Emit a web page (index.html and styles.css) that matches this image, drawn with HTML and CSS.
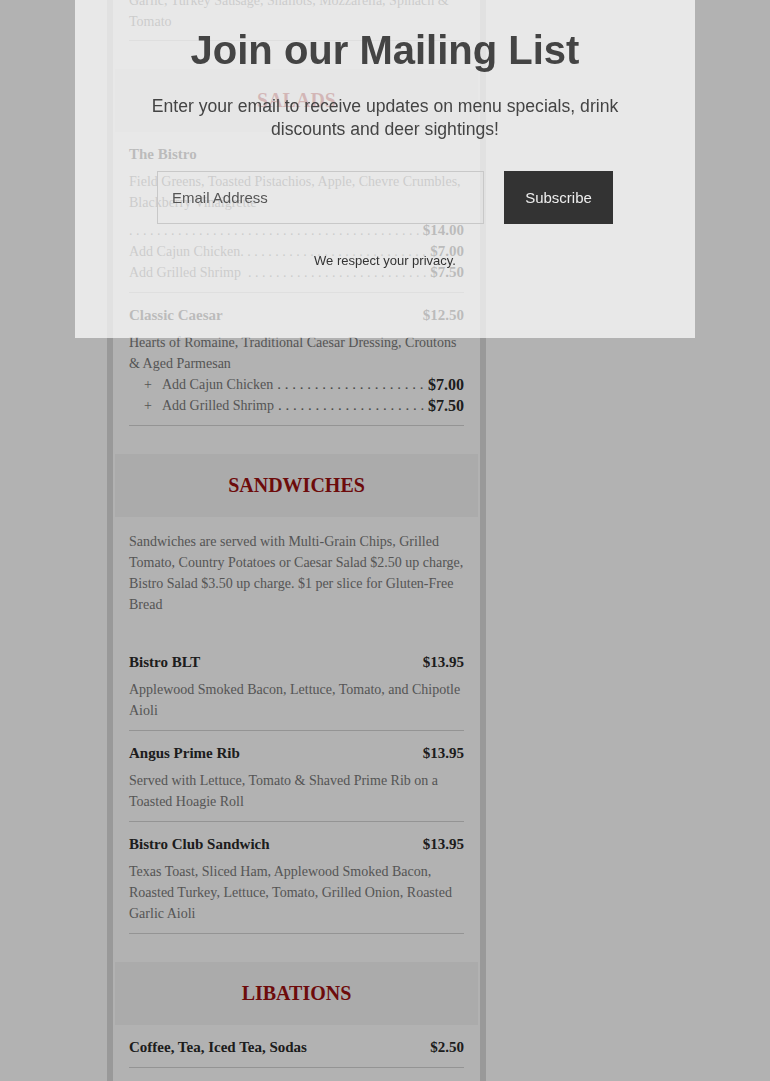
FILE: index.html
```html
<!DOCTYPE html>
<html lang="en">
<head>
    <meta charset="UTF-8">
    <meta name="viewport" content="width=device-width, initial-scale=1.0">
    <title>Bistro Menu</title>
    <link rel="stylesheet" href="styles.css">
</head>
<body>
    <div class="page">
        <div class="menu">
            <div class="item item-cut">
                <p class="desc">Garlic, Turkey Sausage, Shallots, Mozzarella, Spinach &amp; Tomato</p>
            </div>

            <section class="section">
                <h2 class="section-title">Salads</h2>
                <div class="item">
                    <div class="item-head"><span>The Bistro</span></div>
                    <p class="desc">Field Greens, Toasted Pistachios, Apple, Chevre Crumbles, Blackberry Vinaigrette</p>
                    <div class="addons addons-spaced">
                        <div class="addon"><span class="dots"></span><span class="price">$14.00</span></div>
                        <div class="addon"><span>Add Cajun Chicken</span><span class="dots"></span><span class="price">$7.00</span></div>
                        <div class="addon"><span>Add Grilled Shrimp</span><span class="dots dots-gap"></span><span class="price">$7.50</span></div>
                    </div>
                </div>
                <div class="item">
                    <div class="item-head"><span>Classic Caesar</span><span>$12.50</span></div>
                    <p class="desc">Hearts of Romaine, Traditional Caesar Dressing, Croutons &amp; Aged Parmesan</p>
                    <div class="addons">
                        <div class="addon addon-plus"><span class="plus">+</span><span>Add Cajun Chicken</span><span class="dots"></span><span class="price">$7.00</span></div>
                        <div class="addon addon-plus"><span class="plus">+</span><span>Add Grilled Shrimp</span><span class="dots"></span><span class="price">$7.50</span></div>
                    </div>
                </div>
            </section>

            <section class="section">
                <h2 class="section-title">Sandwiches</h2>
                <p class="intro">Sandwiches are served with Multi-Grain Chips, Grilled Tomato, Country Potatoes or Caesar Salad $2.50 up charge, Bistro Salad $3.50 up charge. $1 per slice for Gluten-Free Bread</p>
                <div class="item">
                    <div class="item-head"><span>Bistro BLT</span><span>$13.95</span></div>
                    <p class="desc">Applewood Smoked Bacon, Lettuce, Tomato, and Chipotle Aioli</p>
                </div>
                <div class="item">
                    <div class="item-head"><span>Angus Prime Rib</span><span>$13.95</span></div>
                    <p class="desc">Served with Lettuce, Tomato &amp; Shaved Prime Rib on a Toasted Hoagie Roll</p>
                </div>
                <div class="item">
                    <div class="item-head"><span>Bistro Club Sandwich</span><span>$13.95</span></div>
                    <p class="desc">Texas Toast, Sliced Ham, Applewood Smoked Bacon, Roasted Turkey, Lettuce, Tomato, Grilled Onion, Roasted Garlic Aioli</p>
                </div>
            </section>

            <section class="section">
                <h2 class="section-title">Libations</h2>
                <div class="item">
                    <div class="item-head"><span>Coffee, Tea, Iced Tea, Sodas</span><span>$2.50</span></div>
                </div>
                <div class="item">
                    <div class="item-head"><span>Domestic Beer</span><span>$4.00</span></div>
                </div>
            </section>
        </div>
    </div>

    <div class="overlay"></div>
    <div class="modal">
        <h1 class="modal-title">Join our Mailing List</h1>
        <p class="modal-text">Enter your email to receive updates on menu specials, drink discounts and deer sightings!</p>
        <form class="signup">
            <input class="signup-input" type="email" placeholder="Email Address">
            <button class="signup-btn" type="button">Subscribe</button>
        </form>
        <p class="privacy">We respect your privacy.</p>
    </div>
</body>
</html>
```

FILE: styles.css
```css
:root {
    --title: #2a2a2a;
    --muted: #7a7a7a;
    --rule: #d4d4d4;
    --accent: #9c1010;
    --frame: #dcdcdc;
    --band: #f5f5f5;
}

body {
    margin: 0;
    background: #fff;
    font-family: "Liberation Serif", "Times New Roman", serif;
    color: var(--title);
}

/* --- Menu column --- */
.page { padding-left: 107px; }

.menu {
    width: 363px;
    padding: 0 2px;
    margin-top: -10px;
    border-left: 6px solid var(--frame);
    border-right: 6px solid var(--frame);
    background: #fff;
}

.section-title {
    margin: 28px 0 0;
    height: 63px;
    line-height: 63px;
    background: var(--band);
    text-align: center;
    font-size: 20px;
    font-weight: bold;
    text-transform: uppercase;
    color: var(--accent);
}

.intro {
    margin: 0 14px;
    padding: 14px 0 25px;
    font-size: 14px;
    line-height: 21px;
    color: var(--muted);
}

.item { margin: 0 14px; padding: 12px 0 9px; border-bottom: 1px solid var(--rule); }
.item-cut { padding: 0 0 8px; }
.item-head { display: flex; justify-content: space-between; font-size: 15px; font-weight: bold; line-height: 21px; }
.desc { margin: 6px 0 0; font-size: 14px; line-height: 21px; color: var(--muted); }
.item-cut .desc { margin-top: 0; }

.addons-spaced { margin-top: 7px; }
.addon { display: flex; font-size: 14px; line-height: 21px; color: var(--muted); }
.addon .dots { flex: 1; overflow: hidden; white-space: nowrap; }
.addon .dots::after { content: ". . . . . . . . . . . . . . . . . . . . . . . . . . . . . . . . . . . . . . . . . . . . . . . . . . . . . . . . . . . ."; }
.addon .dots-gap { padding-left: 7px; }
.addon .price { font-size: 15px; font-weight: bold; color: var(--title); }

.addon-plus { padding-left: 15px; }
.addon-plus .plus { width: 18px; }
.addon-plus .dots { padding-left: 4px; font-size: 15px; color: #666; }
.addon-plus .price { margin-left: 4px; font-size: 16px; }

/* --- Mailing list popup --- */
.overlay { position: fixed; inset: 0; background: rgba(0, 0, 0, 0.3); }

.modal {
    position: fixed;
    top: 0;
    left: 75px;
    width: 620px;
    height: 338px;
    padding: 26px 70px 0;
    box-sizing: border-box;
    background: rgba(255, 255, 255, 0.7);
    text-align: center;
    font-family: "Liberation Sans", Arial, sans-serif;
    color: #444;
}

.modal-title { margin: 0; font-size: 40px; line-height: 48px; font-weight: bold; }
.modal-text { margin: 21px 0 0; font-size: 17.6px; line-height: 23px; }

.signup { display: flex; justify-content: center; gap: 20px; margin-top: 30px; }
.signup-input {
    width: 327px; height: 53px; box-sizing: border-box; padding: 0 14px;
    border: 1px solid #c8c8c8; background: transparent;
    font-family: inherit; font-size: 15px; color: #444;
}
.signup-input::placeholder { color: #555; }
.signup-btn {
    width: 109px; height: 53px; border: none; background: #333; color: #eee;
    font-family: inherit; font-size: 15px; cursor: pointer;
}

.privacy { margin: 29px 0 0; font-size: 13px; line-height: 16px; color: #333; }
```
